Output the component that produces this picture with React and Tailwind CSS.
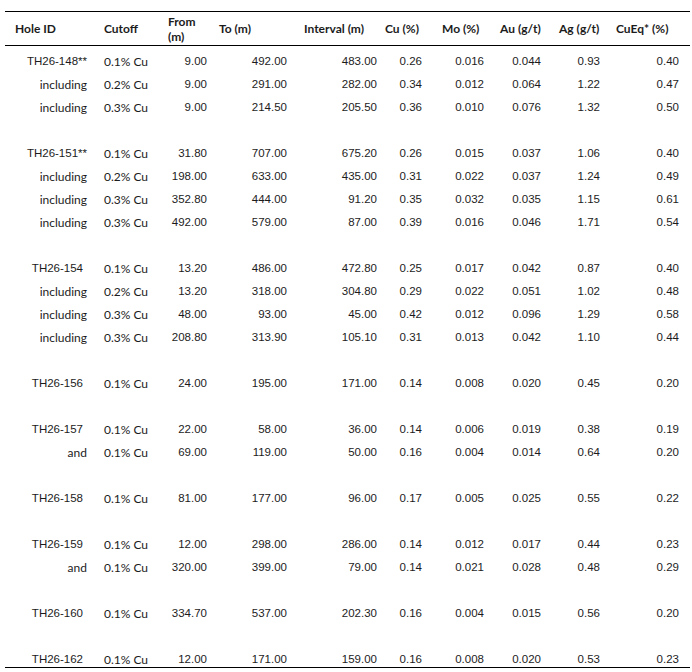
import React from 'react';

// column layout: header padding / data cell alignment
const cols = [
  { head: 'Hole ID', cell: 'justify-end pr-[10px]', hcell: 'pl-[10px]' },
  { head: 'Cutoff', cell: 'justify-start pl-[7px]', hcell: 'pl-[7px]' },
  { head: 'From (m)', cell: 'justify-end pr-[6px]', hcell: 'pl-[7px] w-[40px]' },
  { head: 'To (m)', cell: 'justify-end pr-[10px]', hcell: 'pl-[6px]' },
  { head: 'Interval (m)', cell: 'justify-end pr-[3px]', hcell: 'pl-[7px]' },
  { head: 'Cu (%)', cell: 'justify-end pr-[13px]', hcell: 'pl-[5px]' },
  { head: 'Mo (%)', cell: 'justify-end pr-[10px]', hcell: 'pl-[7px]' },
  { head: 'Au (g/t)', cell: 'justify-end pr-[11px]', hcell: 'pl-[6px]' },
  { head: 'Ag (g/t)', cell: 'justify-end pr-[9px]', hcell: 'pl-[7px]' },
  { head: 'CuEq* (%)', cell: 'justify-end pr-[11px]', hcell: 'pl-[7px]' },
];

const rows = [
  ['TH26-148**', '0.1% Cu', '9.00', '492.00', '483.00', '0.26', '0.016', '0.044', '0.93', '0.40'],
  ['including', '0.2% Cu', '9.00', '291.00', '282.00', '0.34', '0.012', '0.064', '1.22', '0.47'],
  ['including', '0.3% Cu', '9.00', '214.50', '205.50', '0.36', '0.010', '0.076', '1.32', '0.50'],
  null,
  ['TH26-151**', '0.1% Cu', '31.80', '707.00', '675.20', '0.26', '0.015', '0.037', '1.06', '0.40'],
  ['including', '0.2% Cu', '198.00', '633.00', '435.00', '0.31', '0.022', '0.037', '1.24', '0.49'],
  ['including', '0.3% Cu', '352.80', '444.00', '91.20', '0.35', '0.032', '0.035', '1.15', '0.61'],
  ['including', '0.3% Cu', '492.00', '579.00', '87.00', '0.39', '0.016', '0.046', '1.71', '0.54'],
  null,
  ['TH26-154', '0.1% Cu', '13.20', '486.00', '472.80', '0.25', '0.017', '0.042', '0.87', '0.40'],
  ['including', '0.2% Cu', '13.20', '318.00', '304.80', '0.29', '0.022', '0.051', '1.02', '0.48'],
  ['including', '0.3% Cu', '48.00', '93.00', '45.00', '0.42', '0.012', '0.096', '1.29', '0.58'],
  ['including', '0.3% Cu', '208.80', '313.90', '105.10', '0.31', '0.013', '0.042', '1.10', '0.44'],
  null,
  ['TH26-156', '0.1% Cu', '24.00', '195.00', '171.00', '0.14', '0.008', '0.020', '0.45', '0.20'],
  null,
  ['TH26-157', '0.1% Cu', '22.00', '58.00', '36.00', '0.14', '0.006', '0.019', '0.38', '0.19'],
  ['and', '0.1% Cu', '69.00', '119.00', '50.00', '0.16', '0.004', '0.014', '0.64', '0.20'],
  null,
  ['TH26-158', '0.1% Cu', '81.00', '177.00', '96.00', '0.17', '0.005', '0.025', '0.55', '0.22'],
  null,
  ['TH26-159', '0.1% Cu', '12.00', '298.00', '286.00', '0.14', '0.012', '0.017', '0.44', '0.23'],
  ['and', '0.1% Cu', '320.00', '399.00', '79.00', '0.14', '0.021', '0.028', '0.48', '0.29'],
  null,
  ['TH26-160', '0.1% Cu', '334.70', '537.00', '202.30', '0.16', '0.004', '0.015', '0.56', '0.20'],
  null,
  ['TH26-162', '0.1% Cu', '12.00', '171.00', '159.00', '0.16', '0.008', '0.020', '0.53', '0.23'],
];

const grid = 'grid grid-cols-[92px_64px_52px_84px_83px_55px_59px_58px_57px_81px]';
const sans = "font-['Liberation_Sans',Arial,sans-serif]";
const lato = "font-['Lato','Liberation_Sans',sans-serif]";

function Cell({ value, col, i }) {
  // words (including / and / cutoffs) use the softer face
  const wordy = i === 1 || value === 'including' || value === 'and';
  const shift = i === 0 && /^TH/.test(value) && !value.endsWith('**') ? 'pr-[14px]' : '';
  return (
    <div className={`flex items-end pb-[1px] ${col.cell} ${shift}`}>
      <span className={wordy ? `${lato} text-[12px] leading-[13px]` : `${sans} text-[11.5px] leading-[13px]`}>
        {value}
      </span>
    </div>
  );
}

export default function App() {
  return (
    <div className="bg-white w-[692px] h-[672px] pt-[11px] text-[#1c1c1c]">
      <div className="ml-[5px] w-[685px] border-t-[1.5px] border-b-[1.5px] border-black">
        <div className={`${grid} h-[34px] border-b-[1.5px] border-black ${lato} font-bold text-[12px] leading-[15px]`}>
          {cols.map((c) => (
            <div key={c.head} className="flex items-center">
              <span className={c.hcell}>{c.head}</span>
            </div>
          ))}
        </div>
        {rows.map((r, ri) =>
          r ? (
            <div key={ri} className={`${grid} h-[23px]`}>
              {r.map((v, i) => (
                <Cell key={i} value={v} col={cols[i]} i={i} />
              ))}
            </div>
          ) : (
            <div key={ri} className="h-[23px]" />
          )
        )}
      </div>
    </div>
  );
}
